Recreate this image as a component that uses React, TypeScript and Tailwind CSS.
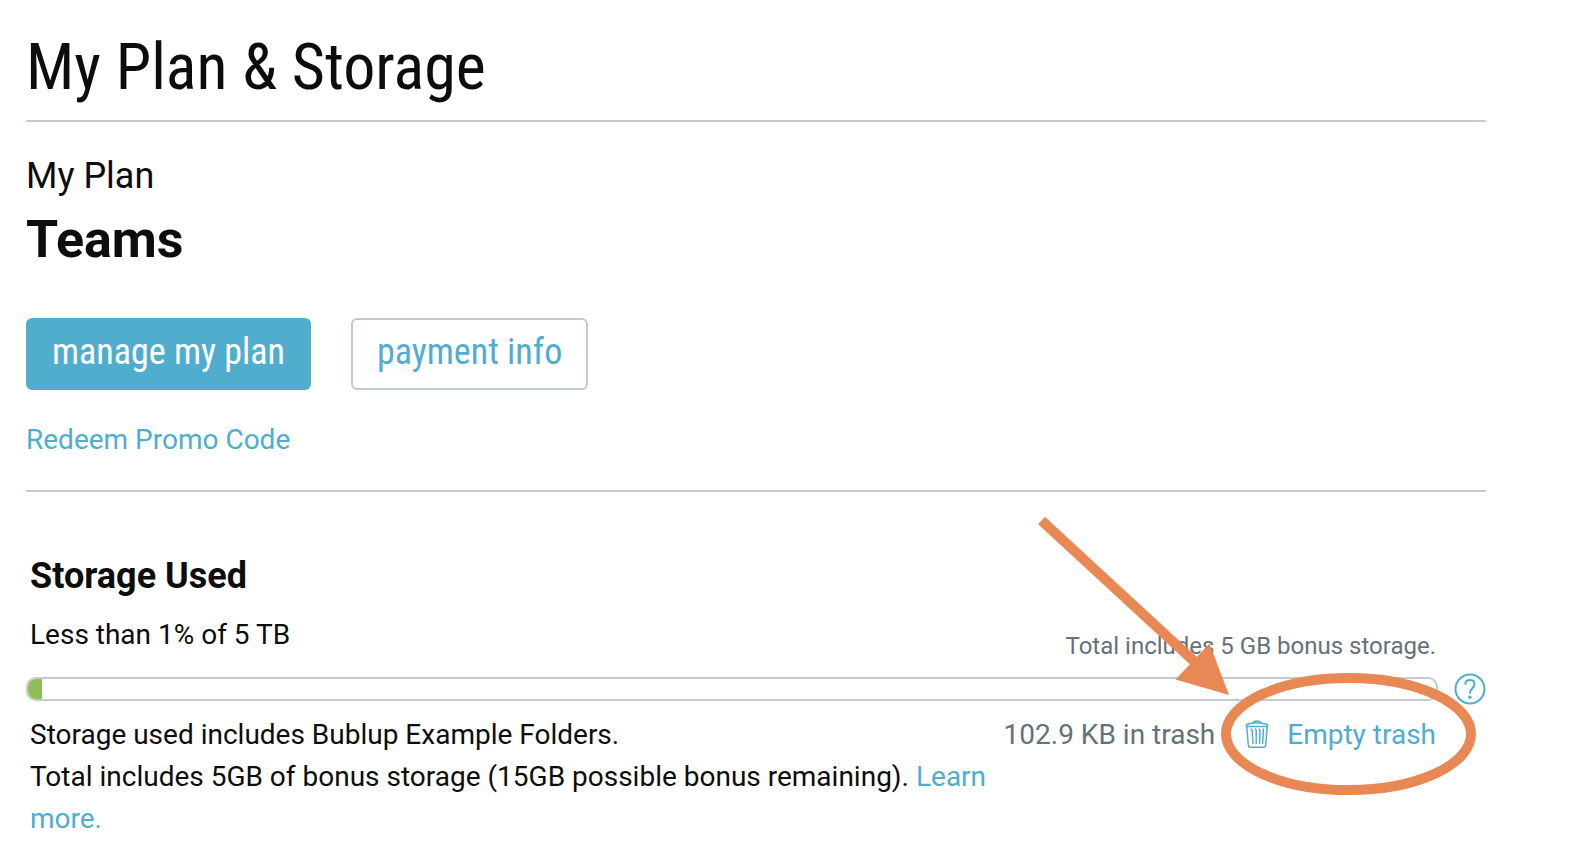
import { useState } from 'react'

const FOLDER_COPY = 'Storage used includes Bublup Example Folders.'
const BONUS_COPY = 'Total includes 5GB of bonus storage (15GB possible bonus remaining).'

function TrashIcon() {
  return (
    <svg width="24" height="30" viewBox="0 1 24 30" fill="none" stroke="currentColor" strokeWidth="1.5" strokeLinecap="round" strokeLinejoin="round" aria-hidden>
      <path d="M1.300 7.500c-.2-1.200 0-2 1-2.300L8 4c.5-1.300 1.700-2 4-2s3.500.7 4 2l5.700 1.200c1 .3 1.200 1.100 1 2.300z" />
      <path d="M8 4h8" />
      <path d="M1.800 7.500 3.300 26c.1 1.400.9 2.200 2.200 2.200h13c1.300 0 2.100-.8 2.200-2.200L22.200 7.500" />
      <path d="M6 10c.8.200 1.100.9 1.200 1.800L8 24.500M10.300 10c.7.200.9.900.9 1.800v12.700M14.300 10c.5.400.6 1 .6 1.800l-.3 12.700M18 10c.4.500.5 1.100.4 1.800l-.8 12.700" />
    </svg>
  )
}

function HelpIcon() {
  return (
    <svg width="32" height="32" viewBox="0 0 32 32" fill="none" stroke="currentColor" strokeWidth="2" aria-hidden>
      <circle cx="16" cy="16" r="14.500" />
      <path d="M11.300 11.800c0-2.900 1.800-4.700 4.600-4.700s4.600 1.700 4.600 4.300c0 3.800-4.500 4.300-4.500 8v1.200" />
      <circle cx="15.900" cy="24.200" r="1.700" fill="currentColor" stroke="none" />
    </svg>
  )
}

// Arrow and ring that point the user at the "Empty trash" action.
function Callout() {
  return (
    <svg className="pointer-events-none absolute -top-[199px] -right-10" width="440" height="280" viewBox="0 0 440 280" fill="none" aria-hidden>
      <path d="M5.500 5.500 160 148" stroke="#e88854" strokeWidth="10" />
      <path d="M193 180 139.500 164.500 173.500 128.500z" fill="#e88854" />
      <ellipse cx="312.500" cy="219" rx="122.500" ry="56" stroke="#e88854" strokeWidth="10" />
    </svg>
  )
}

export default function App() {
  const [usedPercent] = useState(1)

  return (
    <main className="min-h-screen bg-white pt-7 pr-[94px] pb-3 pl-[26px] font-['Roboto',sans-serif] text-[28px] leading-[42px] text-[#0d0d0d]">
      <header className="border-b-2 border-[#c1cbd0] pb-3">
        <h1 className="font-['Roboto_Condensed','Roboto',sans-serif] text-[64px] leading-[80px]">My Plan &amp; Storage</h1>
      </header>

      <section className="border-b-2 border-[#c1cbd0] pt-[30px] pb-[29px]">
        <p className="text-[36px] leading-[48px]">My Plan</p>
        <h2 className="mt-2 text-[52px] leading-[64px] font-bold">Teams</h2>
        <div className="mt-[46px] flex gap-10 font-['Roboto_Condensed','Roboto',sans-serif] text-[36px] leading-[48px]">
          <button type="button" className="rounded-md border-2 border-[#50adce] bg-[#50adce] px-6 pt-2 pb-3 text-white">
            manage my plan
          </button>
          <button type="button" className="rounded-md border-2 border-[#c1cbcd] bg-white px-6 pt-2 pb-3 text-[#50adce]">
            payment info
          </button>
        </div>
        <a href="#promo" className="mt-[29px] block w-fit text-[#50adce]">Redeem Promo Code</a>
      </section>

      <section className="pt-[60px]">
        <h3 id="storage-title" className="pl-1 text-[36px] leading-[48px] font-bold">Storage Used</h3>
        <div className="mt-3.5 flex items-start justify-between pr-[50px] pl-1">
          <p>Less than 1% of 5 TB</p>
          <p className="pt-4 text-[24px] leading-8 text-[#63717a]">Total includes 5 GB bonus storage.</p>
        </div>

        <div className="mt-[11px] flex items-center gap-4">
          <div
            role="progressbar"
            aria-labelledby="storage-title"
            aria-valuenow={usedPercent}
            aria-valuemin={0}
            aria-valuemax={100}
            className="h-6 flex-1 overflow-hidden rounded-[10px] border-2 border-[#c1cbd0]"
          >
            <div className="h-full bg-[#90c055]" style={{ width: `${usedPercent}%` }} />
          </div>
          <button type="button" aria-label="Storage help" className="text-[#50adce]">
            <HelpIcon />
          </button>
        </div>

        <div className="mt-[9px] flex items-start gap-3 pr-[50px] pl-1">
          <div className="flex-1">
            <p>{FOLDER_COPY}</p>
            <p>
              {BONUS_COPY} <a href="#bonus" className="text-[#50adce]">Learn more.</a>
            </p>
          </div>
          <div className="relative flex shrink-0 items-center text-[#63717a]">
            <span>102.9 KB in trash</span>
            <button type="button" className="ml-[30px] flex items-center gap-[18px] text-[#50adce]">
              <TrashIcon />
              Empty trash
            </button>
            <Callout />
          </div>
        </div>
      </section>
    </main>
  )
}
